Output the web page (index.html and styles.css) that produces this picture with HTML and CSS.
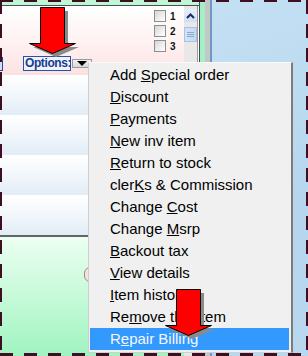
FILE: index.html
```html
<!DOCTYPE html>
<html lang="en">
<head>
  <meta charset="UTF-8">
  <title>Options menu</title>
  <link rel="stylesheet" href="styles.css">
</head>
<body>
<div class="screen">
  <div class="window">
    <div class="title-strip"></div>
    <div class="window-body">
      <div class="main">
        <div class="header">
          <span class="edge-mark"></span>
          <div class="options">
            <span class="options-label">Options:</span>
            <span class="options-drop">
              <svg width="10" height="5" viewBox="0 0 10 5"><polygon points="0,0 10,0 5,5" fill="#000"/></svg>
            </span>
          </div>
          <ul class="checks">
            <li><span class="box"></span>1</li>
            <li><span class="box"></span>2</li>
            <li><span class="box"></span>3</li>
          </ul>
        </div>
        <div class="rows">
          <div class="row"></div>
          <div class="row"></div>
          <div class="row"></div>
          <div class="row"></div>
        </div>
        <div class="totals">
          <span class="pill"></span>
        </div>
      </div>
      <div class="scroll">
        <div class="scroll-up">
          <svg width="9" height="6" viewBox="0 0 9 6"><polyline points="1,5 4.5,1.5 8,5" fill="none" stroke="#1b2a66" stroke-width="2"/></svg>
        </div>
        <div class="scroll-thumb"><i></i><i></i><i></i></div>
      </div>
    </div>
  </div>
  <div class="gutter">
    <span class="g-mint"></span>
    <span class="g-grey"></span>
    <span class="g-blue"></span>
  </div>
  <div class="desktop"></div>
</div>

<!--弹出菜单-->
<ul class="menu">
  <li>Add <u>S</u>pecial order</li>
  <li><u>D</u>iscount</li>
  <li><u>P</u>ayments</li>
  <li><u>N</u>ew inv item</li>
  <li><u>R</u>eturn to stock</li>
  <li>cler<u>K</u>s &amp; Commission</li>
  <li>Change <u>C</u>ost</li>
  <li>Change <u>M</u>srp</li>
  <li><u>B</u>ackout tax</li>
  <li><u>V</u>iew details</li>
  <li><u>I</u>tem history</li>
  <li>Re<u>m</u>ove this item</li>
  <li class="active">R<u>e</u>pair Billing</li>
</ul>

<!--箭头-->
<svg class="arrow arrow-top" width="52" height="52" viewBox="0 0 52 52">
  <polygon points="15,4 39,4 39,40 50,40 27,50 4,40 15,40" fill="#8a8a8a"/>
  <polygon points="11.5,0.5 35.5,0.5 35.5,36.5 46.5,36.5 23.5,46.5 0.5,36.5 11.5,36.5" fill="#ff0000" stroke="#000" stroke-width="1"/>
</svg>
<svg class="arrow arrow-bottom" width="52" height="52" viewBox="0 0 52 52">
  <polygon points="15,4 39,4 39,40 50,40 27,50 4,40 15,40" fill="#8a8a8a"/>
  <polygon points="11.5,0.5 35.5,0.5 35.5,36.5 46.5,36.5 23.5,46.5 0.5,36.5 11.5,36.5" fill="#ff0000" stroke="#000" stroke-width="1"/>
</svg>

<div class="frame"></div>
</body>
</html>
```

FILE: styles.css
```css
* {
  margin: 0;
  padding: 0;
  box-sizing: border-box;
}

body {
  width: 308px;
  height: 356px;
  overflow: hidden;
  position: relative;
  font-family: "Liberation Sans", Arial, sans-serif;
}

ul {
  list-style: none;
}

.screen {
  display: flex;
  height: 356px;
}

/*左边窗口*/
.window {
  width: 200px;
  display: flex;
  flex-direction: column;
  border-right: 1px solid #4a4a4a;
}

.title-strip {
  height: 6px;
  background: #bff6d6;
  border-bottom: 1px solid #505050;
}

.window-body {
  flex: 1;
  display: flex;
}

.main {
  width: 184px;
  display: flex;
  flex-direction: column;
}

.header {
  height: 69px;
  display: flex;
  align-items: flex-start;
  background: linear-gradient(#ffffff 0%, #fff4f4 45%, #fbe1e1 100%);
}

.edge-mark {
  width: 3px;
  height: 14px;
  margin-top: 51px;
  border: 1px solid #2848a8;
  border-left: 0;
  background: #cfe0f4;
}

.options {
  display: flex;
  align-items: flex-start;
  margin: 50px 0 0 20px;
}

.options-label {
  height: 15px;
  width: 48px;
  padding-left: 1px;
  border: 1px solid #2c4fa8;
  background: #eef3fb;
  color: #1b3b8c;
  font-size: 12px;
  font-weight: bold;
  letter-spacing: -0.4px;
  line-height: 13px;
  white-space: nowrap;
}

.options-drop {
  width: 20px;
  height: 9px;
  margin: 3px 0 0 1px;
  display: flex;
  align-items: center;
  justify-content: center;
  background: linear-gradient(#f2f2f2, #d8d8d8);
  border: 1px solid #9a9a9a;
}

.checks {
  margin: 4px 0 0 62px;
  display: flex;
  flex-direction: column;
  gap: 3px;
}

.checks li {
  height: 12px;
  display: flex;
  align-items: center;
  gap: 4px;
  font-size: 10px;
  font-weight: bold;
  color: #111;
}

.checks .box {
  width: 12px;
  height: 12px;
  border: 1px solid #8e8e8e;
  background: linear-gradient(135deg, #d6d6d6, #f4f4f4 70%, #ffffff);
}

.rows {
  display: flex;
  flex-direction: column;
}

.row {
  height: 40px;
  background: linear-gradient(#ffffff, #f4f8fc 40%, #e2ecf6);
}

.totals {
  flex: 1;
  border-top: 2px solid #646464;
  background: linear-gradient(#ecfff2, #c6fad9 50%, #9ff4c1);
  display: flex;
  justify-content: flex-end;
  padding-top: 30px;
}

.pill {
  width: 12px;
  height: 15px;
  margin-right: 88px;
  border: 1px solid #9a8a8a;
  border-radius: 7px;
  background: #fbe0e0;
}

/*滚动条*/
.scroll {
  width: 14px;
  background: #e8e8e8;
  border-right: 1px solid #9c9c9c;
  padding: 3px 0 0 0;
  display: flex;
  flex-direction: column;
  align-items: center;
}

.scroll-up {
  width: 13px;
  height: 13px;
  display: flex;
  align-items: center;
  justify-content: center;
  background: linear-gradient(#e4eefa, #cfe0f2);
}

.scroll-thumb {
  width: 13px;
  height: 15px;
  margin-top: 5px;
  border: 1px solid #a9c3e2;
  background: linear-gradient(90deg, #d2e3f6, #c3d8f1);
  display: flex;
  flex-direction: column;
  align-items: center;
  justify-content: center;
  gap: 1px;
}

.scroll-thumb i {
  width: 7px;
  height: 1px;
  background: #8aa8cc;
}

.gutter {
  display: flex;
}

.g-mint {
  width: 5px;
  background: #a3efc6;
}

.g-grey {
  width: 5px;
  background: #c6c6c6;
}

.g-blue {
  width: 2px;
  background: #6f98c2;
}

.desktop {
  flex: 1;
  background: linear-gradient(160deg, #c4e0f3, #b6d6ee 60%, #b9d8ef);
}

/*菜单*/
.menu {
  position: absolute;
  left: 88px;
  top: 62px;
  width: 205px;
  height: 291px;
  padding: 1px 2px 0 1px;
  background: #f0f0f0;
  border-top: 1px solid #fafafa;
  border-left: 1px solid #cfcfcf;
  border-right: 2px solid #7c7c7c;
  border-bottom: 1px solid #d0d0d0;
}

.menu li {
  height: 22px;
  line-height: 22px;
  padding-left: 20px;
  font-size: 15px;
  color: #000;
  white-space: nowrap;
}

.menu li.active {
  background: #3399ff;
  color: #f4f8ff;
}

.arrow {
  position: absolute;
}

.arrow-top {
  left: 29px;
  top: 7px;
}

.arrow-bottom {
  left: 165px;
  top: 289px;
}

/*虚线外框*/
.frame {
  position: absolute;
  left: 0;
  top: 0;
  width: 308px;
  height: 356px;
  pointer-events: none;
  background:
    repeating-linear-gradient(90deg, #3e0f20 0 13px, transparent 13px 24px) left top / 100% 2px no-repeat,
    repeating-linear-gradient(90deg, #3e0f20 0 13px, transparent 13px 24px) left bottom / 100% 3px no-repeat,
    repeating-linear-gradient(180deg, #3e0f20 0 14px, transparent 14px 24px) left top / 2px 100% no-repeat,
    repeating-linear-gradient(180deg, #3e0f20 0 14px, transparent 14px 24px) right top / 2px 100% no-repeat;
}
```
